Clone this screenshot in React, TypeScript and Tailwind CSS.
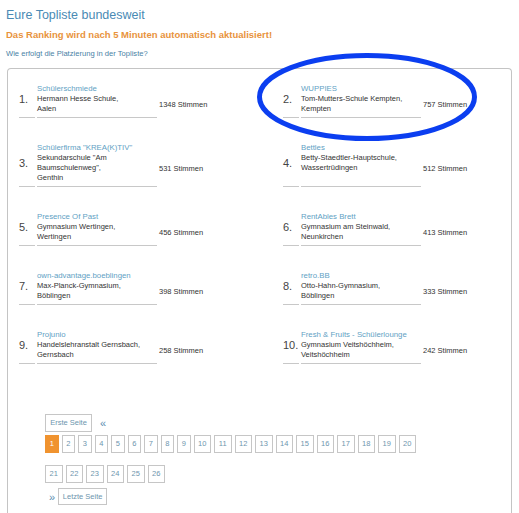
import React from "react";

type Entry = { n: string; name: string; school: string[]; votes: string };

const entries: Entry[] = [
  { n: "1.", name: "Schülerschmiede", school: ["Hermann Hesse Schule,", "Aalen"], votes: "1348 Stimmen" },
  { n: "2.", name: "WUPPIES", school: ["Tom-Mutters-Schule Kempten,", "Kempten"], votes: "757 Stimmen" },
  { n: "3.", name: "Schülerfirma \"KREA(K)TIV\"", school: ["Sekundarschule \"Am", "Baumschulenweg\",", "Genthin"], votes: "531 Stimmen" },
  { n: "4.", name: "Bettles", school: ["Betty-Staedtler-Hauptschule,", "Wassertrüdingen"], votes: "512 Stimmen" },
  { n: "5.", name: "Presence Of Past", school: ["Gymnasium Wertingen,", "Wertingen"], votes: "456 Stimmen" },
  { n: "6.", name: "RentAbles Brett", school: ["Gymnasium am Steinwald,", "Neunkirchen"], votes: "413 Stimmen" },
  { n: "7.", name: "own-advantage.boeblingen", school: ["Max-Planck-Gymnasium,", "Böblingen"], votes: "398 Stimmen" },
  { n: "8.", name: "retro.BB", school: ["Otto-Hahn-Gymnasium,", "Böblingen"], votes: "333 Stimmen" },
  { n: "9.", name: "Projunio", school: ["Handelslehranstalt Gernsbach,", "Gernsbach"], votes: "258 Stimmen" },
  { n: "10.", name: "Fresh & Fruits - Schülerlounge", school: ["Gymnasium Veitshöchheim,", "Veitshöchheim"], votes: "242 Stimmen" },
];

const pages = Array.from({ length: 26 }, (_, i) => i + 1);

function Row({ e }: { e: Entry }) {
  return (
    <div className="flex items-stretch">
      <div className="w-[16px] border-b border-[#c8c8c8] flex items-center pb-[3px] text-[11px] leading-[12px] text-[#444] whitespace-nowrap">
        {e.n}
      </div>
      <div className="ml-[2px] w-[120px] border-b border-[#c8c8c8] pb-[3px]">
        <div className="text-[7.8px] leading-[10px] text-[#5f9fc4] whitespace-nowrap">{e.name}</div>
        {e.school.map((s, i) => (
          <div key={i} className="text-[7.5px] leading-[10px] text-[#333] whitespace-nowrap">
            {s}
          </div>
        ))}
      </div>
      <div className="ml-[2px] flex items-center pt-[8px] text-[7.5px] leading-[10px] text-[#333] whitespace-nowrap">
        {e.votes}
      </div>
    </div>
  );
}

export default function App() {
  return (
    <div className="relative w-[519px] h-[513px] overflow-hidden bg-white font-['Liberation_Sans',Arial,sans-serif]">
      <div className="px-[6px]">
        <div className="pt-[8px] text-[12.5px] leading-[15px] text-[#4a8ab4] whitespace-nowrap">
          Eure Topliste bundesweit
        </div>
        <div className="mt-[6px] text-[9.5px] leading-[12px] font-bold text-[#e8933c] whitespace-nowrap">
          Das Ranking wird nach 5 Minuten automatisch aktualisiert!
        </div>
        <div className="mt-[8px] text-[7.6px] leading-[10px] text-[#4a7fa5] whitespace-nowrap">
          Wie erfolgt die Platzierung in der Topliste?
        </div>
      </div>

      <div className="mt-[9px] ml-[7px] w-[505px] border border-b-0 border-[#c4c4c4] rounded-t-[4px] pt-[15px] pl-[11px] pb-[40px]">
        <div className="grid grid-cols-[264px_1fr] gap-y-[25px]">
          {entries.map((e) => (
            <Row key={e.n} e={e} />
          ))}
        </div>

        <div className="mt-[50px] ml-[26px]">
          <div className="flex items-center gap-[8px]">
            <div className="h-[18px] w-[47px] border border-[#c6c6c6] flex items-center justify-center text-[7.5px] text-[#6e96ae] whitespace-nowrap">
              Erste Seite
            </div>
            <span className="text-[11px] leading-[12px] text-[#5a8cb0]">«</span>
          </div>
          <div className="mt-[3px] flex flex-wrap w-[380px] gap-x-[3px] gap-y-[12px]">
            {pages.map((p) => (
              <div
                key={p}
                className={
                  (p < 10 ? "w-[13.5px] " : "w-[17.5px] ") +
                  (p === 1
                    ? "bg-[#f0932f] border-[#f0932f] text-white "
                    : "border-[#c6c6c6] text-[#6e96ae] ") +
                  "h-[18px] border flex items-center justify-center text-[7.5px]"
                }
              >
                {p}
              </div>
            ))}
          </div>
          <div className="mt-[5px] flex items-center">
            <span className="ml-[4px] text-[11px] leading-[12px] text-[#5a8cb0]">»</span>
            <div className="ml-[3px] h-[17px] w-[49px] border border-[#c6c6c6] flex items-center justify-center text-[7.5px] text-[#6e96ae] whitespace-nowrap">
              Letzte Seite
            </div>
          </div>
        </div>
      </div>

      <svg className="absolute left-[257px] top-[53px]" width="220" height="88" viewBox="0 0 220 88">
        <ellipse cx="110" cy="44" rx="107.5" ry="41.5" fill="none" stroke="#0b3ef0" strokeWidth="5" />
      </svg>
    </div>
  );
}
